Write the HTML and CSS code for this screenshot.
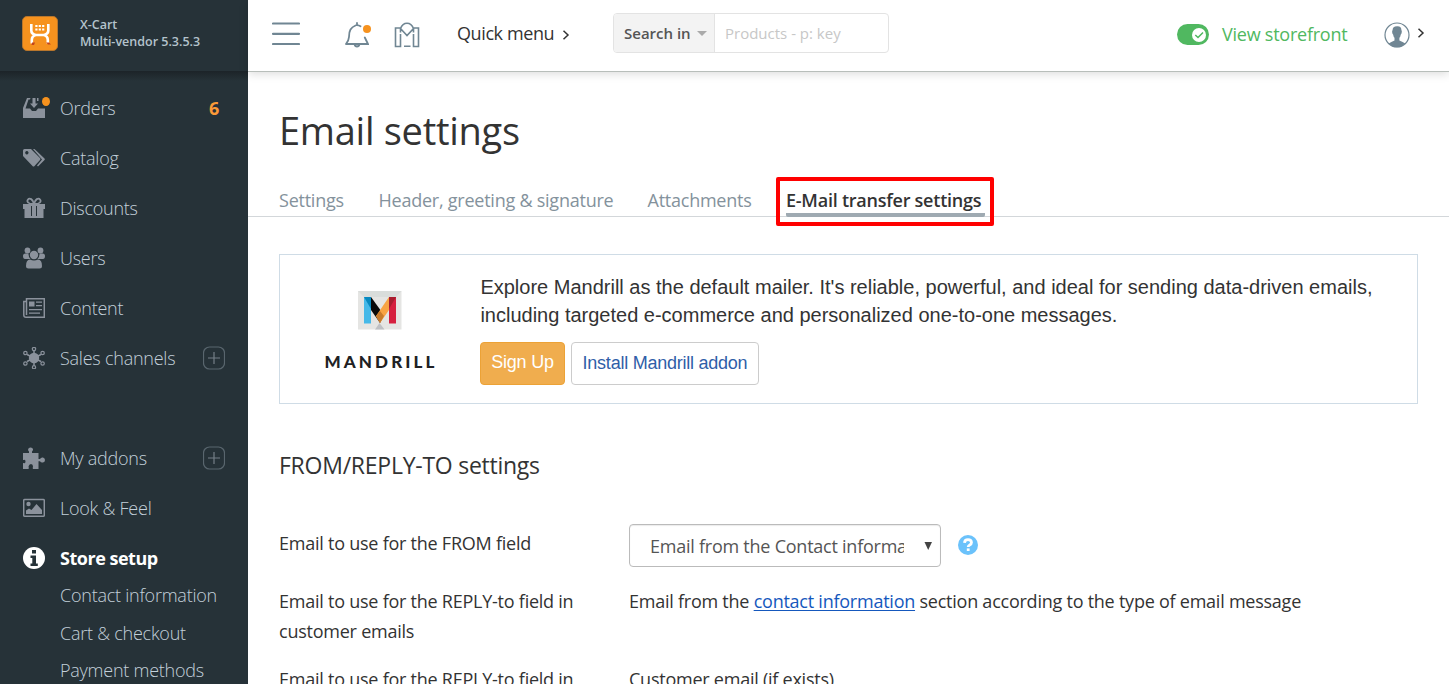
FILE: index.html
```html
<!DOCTYPE html>
<html lang="en">
<head>
<meta charset="utf-8">
<title>Email settings</title>
<link rel="stylesheet" href="styles.css">
</head>
<body>
<div class="app">
  <aside class="sidebar">
    <div class="brand">
      <svg class="brand-logo" width="36" height="36" viewBox="0 0 36 36">
        <rect x=".5" y=".5" width="35" height="34" rx="4.5" fill="#f6921e" stroke="#b8762c"/>
        <path d="M9.300 8v6.500c0 3 2.500 4 4.500 4.500h8c2-.5 4.500-1.500 4.500-4.500V8M9.800 27.500v-3.500c0-3 2-4.500 4-5h8c2 .5 4 2 4 5v3.500" fill="none" stroke="#fff" stroke-width="2.600"/>
        <path d="M13.300 9h2.200v2h-2.200zm3.400 0h2.200v2h-2.200zm3.400 0h2.200v2h-2.200zm-6.800 3.500h2.200v2h-2.200zm3.400 0h2.200v2h-2.200zm3.400 0h2.200v2h-2.200z" fill="#fff"/>
        <path d="M10 26.500h3l-1 2.500h-2.500zm14 0h3l2 2h-3z" fill="#c3451c"/>
      </svg>
      <div class="brand-text">X-Cart<br>Multi-vendor 5.3.5.3</div>
    </div>
    <nav class="menu">
      <a class="menu-item">
        <svg class="menu-icon" viewBox="0 0 22 22"><path d="M4 1h3.500L7 2.500H5.500L2.500 11.500H7l2 2.500h4l2-2.500h7V21H0V11z"/><path d="M9.500 1h3v5.500H15L11 11 7 6.500h2.500zM14 1h1.500v3H14z"/></svg>
        <span class="menu-label">Orders</span><span class="count">6</span><i class="dot menu-dot"></i>
      </a>
      <a class="menu-item">
        <svg class="menu-icon" viewBox="0 0 22 22"><path fill-rule="evenodd" d="M0 3.500Q0 2 1.500 2H8l9 9q1 1 0 2l-5.500 6q-1 1-2 0L0 9zM3.800 4a1.700 1.700 0 1 0 .1 0z"/><path d="M10 2h1.500l10 9.500q.8.800 0 1.500L15 19.500l-1-1 5-6z"/></svg>
        <span class="menu-label">Catalog</span>
      </a>
      <a class="menu-item">
        <svg class="menu-icon" viewBox="0 0 22 22"><path fill-rule="evenodd" d="M0 7h22v5h-1.500v9h-19v-9H0zM8 9v10h6V9z"/><path d="M10 7C5 7 3.500 4.500 5 2.500S10 2 11 7C12 2 15.500.5 17 2.500S17 7 12 7" fill="none" stroke="#8b929c" stroke-width="1.800"/><path d="M9 9h4v10H9z"/></svg>
        <span class="menu-label">Discounts</span>
      </a>
      <a class="menu-item">
        <svg class="menu-icon" viewBox="0 0 22 22"><circle cx="4.500" cy="3.500" r="2.900"/><circle cx="17.500" cy="3.500" r="2.900"/><circle cx="11" cy="8" r="4.200"/><path d="M0 9q0-2.500 2-2.500h3.500q0 4 2 5.500H2Q0 12 0 9zM22 9q0-2.500-2-2.500h-3.500q0 4-2 5.500H20q2 0 2-3zM3 19q0-6.500 4-6.500 4 2 8 0 4 0 4 6.500 0 2.500-2.500 2.500h-11Q3 21.500 3 19z"/></svg>
        <span class="menu-label">Users</span>
      </a>
      <a class="menu-item">
        <svg class="menu-icon" viewBox="0 0 22 22"><path d="M3.500 18V1.700h17.800v18.600H3Q.8 20.300.8 18V4.500h2.500" fill="none" stroke="#8b929c" stroke-width="1.500"/><path d="M6 4.500h5.500v5H6zM13 4.500h6v1.300h-6zm0 3.500h6v1.300h-6zM6 12h13v1.300H6zm0 3.500h11v1.300H6z"/></svg>
        <span class="menu-label">Content</span>
      </a>
      <a class="menu-item">
        <svg class="menu-icon" viewBox="0 0 22 22"><circle cx="11" cy="11" r="5.200"/><path d="M11 3.500v15M4 7.500l14 7M4 14.500l14-7" stroke="#8b929c" stroke-width="1.500"/><g fill="none" stroke="#8b929c" stroke-width="1.200"><circle cx="11" cy="2" r="1.700"/><circle cx="11" cy="20.300" r="1.600"/><circle cx="2.400" cy="6" r="1.700"/><circle cx="19.600" cy="6" r="1.700"/><circle cx="2.400" cy="16.500" r="1.700"/><circle cx="19.600" cy="16.500" r="1.700"/></g></svg>
        <span class="menu-label">Sales channels</span>
        <svg class="add" viewBox="0 0 22 24"><rect x=".5" y="1" width="21" height="22" rx="6"/><path d="M5 12h12M11 6v12"/></svg>
      </a>
      <a class="menu-item second-group">
        <svg class="menu-icon" viewBox="0 0 22 22"><path d="M0 6h6V4.500Q4.500 3 5.500 1.500q2-2 4.200 0 1 1.500-.7 3V6h6.500v6H17q1-2 3-1.500 2 .5 2 2.500t-2 2.500q-2 .5-3-1.200h-1.500V22H10q-.5-1 0-2.500 0-2.500-2-2.500T5.500 19.500Q6 21 5.500 22H0v-6h.5q2 1 2-1.500t-2-1.500H0z"/></svg>
        <span class="menu-label">My addons</span>
        <svg class="add" viewBox="0 0 22 24"><rect x=".5" y="1" width="21" height="22" rx="6"/><path d="M5 12h12M11 6v12"/></svg>
      </a>
      <a class="menu-item">
        <svg class="menu-icon" viewBox="0 0 22 22"><rect x=".7" y="2.500" width="20.600" height="16.800" rx="1" fill="none" stroke="#8b929c" stroke-width="1.500"/><circle cx="5.500" cy="7" r="2.200"/><path d="M3 17v-3.500l3-2 2.500 1.500 5-6L19 13v4z"/></svg>
        <span class="menu-label">Look &amp; Feel</span>
      </a>
      <a class="menu-item active">
        <svg class="menu-icon" viewBox="0 0 22 22"><circle cx="11" cy="11" r="11" fill="#fff"/><path d="M9 3h4v3.500H9zM7.500 8.500H13v8h1.800V19H7.500v-2.500h1.800V11H7.500z" fill="#263238"/></svg>
        <span class="menu-label">Store setup</span>
      </a>
      <div class="submenu">
        <a>Contact information</a><a>Cart &amp; checkout</a><a>Payment methods</a>
      </div>
    </nav>
  </aside>

  <div class="main">
    <header class="topbar">
      <svg class="burger" width="28" height="24" viewBox="0 0 28 24"><path d="M1 1.500h26M1 11.800h26M1 22h26"/></svg>
      <div class="bell">
        <svg width="24" height="26" viewBox="0 0 24 26"><path d="M1 22h22L19.800 15.500M1 22q2.800-3.500 3-7 0-5 1.500-7.500t5-4M12 1v2.200q2 .2 3.500 1.100M9.500 22q.5 2.500 2.500 2.500t2.500-2.500"/></svg>
        <i class="dot bell-dot"></i>
      </div>
      <svg class="market" width="26" height="26" viewBox="0 0 26 26"><path d="M6.500 10.500V6H1.500v18.500h5V12M19.500 10.500V6h5v18.500h-5V12M6.500 6.500 13 13.500l6.500-7Q17.500 1.200 13 1.200T6.500 6.500v4M19.500 6.500v4M10 24.300h6.500"/></svg>
      <span class="quick">Quick menu</span>
      <svg class="chev" width="8" height="10" viewBox="0 0 8 10"><path d="M1.500 .7 6 5 1.500 9.300"/></svg>
      <div class="search"><span class="search-in"><span class="search-label">Search in</span><i class="caret"></i></span><span class="search-field">Products - p: key</span></div>
      <div class="toggle"><svg width="14" height="14" viewBox="0 0 14 14"><circle cx="7" cy="7" r="7" fill="#fff"/><path d="M3.300 7 6 9.500l5-5"/></svg></div>
      <span class="storefront">View storefront</span>
      <svg class="avatar" width="26" height="26" viewBox="0 0 26 26"><circle cx="13" cy="13" r="12" fill="#fff" stroke="#708693" stroke-width="1.200"/><path d="M8.600 8Q8.500 4.500 13 4.200t4.400 3.800q.8 1 .2 3.200-.5 1-.8 1.200-.4 2.300-1.400 3.400v2.600q3.500 1.600 5.900 3.200-3.300 3.600-8.300 3.600t-8.300-3.600q2.400-1.600 5.800-3.200v-2.600q-1-1.100-1.400-3.400-.4-.2-.8-1.200-.5-2.200.3-3.200z" fill="#708693"/></svg>
      <svg class="chev user-chev" width="8" height="10" viewBox="0 0 8 10"><path d="M1.500 .7 6 5 1.500 9.300"/></svg>
    </header>

    <h1 class="title"><span>Email settings</span></h1>
    <nav class="tabs">
      <a class="t1">Settings</a><a class="t2">Header, greeting &amp; signature</a><a class="t3">Attachments</a>
      <a class="current"><span>E-Mail transfer settings</span><i class="highlight"></i></a>
    </nav>

    <section class="promo">
      <div class="mandrill">
        <svg width="44" height="39" viewBox="0 0 44 39"><path d="M0 0h43.500v38.500H0z" fill="#e5e5e3"/><path d="M0 0h43.500L38 6H6z" fill="#d9dddb"/><path d="M6 6h7v26.500H6z" fill="#46b9e8"/><path d="M6 6h7v12z" fill="#0789bf"/><path d="M13 6 26 24l-4 8-9-13z" fill="#090909"/><path d="M31 6v13l-9 13-4-7z" fill="#f8a444"/><path d="m22 20 4 5-4 7-4-7z" fill="#c87b2b"/><path d="M31 6h7v26.500h-7z" fill="#d6203f"/><path d="M31 6h7l-7 12z" fill="#a81e30"/><path d="m21.500 32 5 6.500h-9.500z" fill="#bec0c4"/></svg>
        <span class="mandrill-name">MANDRILL</span>
      </div>
      <div class="promo-body">
        <div class="promo-text">Explore Mandrill as the default mailer. It's reliable, powerful, and ideal for sending data-driven emails,<br>including targeted e-commerce and personalized one-to-one messages.</div>
        <div class="buttons"><button class="btn signup">Sign Up</button><button class="btn install">Install Mandrill addon</button></div>
      </div>
    </section>

    <h2 class="heading">FROM/REPLY-TO settings</h2>
    <div class="form">
      <div class="row row-select">
        <span class="label">Email to use for the FROM field</span>
        <div class="select"><span class="select-text">Email from the Contact information</span><svg width="8" height="8" viewBox="0 0 8 8"><path d="M.5 0h7.500L4.200 8z" fill="#444"/></svg></div>
        <svg class="help" width="20" height="20" viewBox="0 0 20 20"><circle cx="10" cy="10" r="10" fill="#6bc2fb"/><path d="M6.500 7.800Q6.700 4.700 10 4.700t3.500 2.800q0 1.500-1.800 2.400-1.500.7-1.500 2.100" fill="none" stroke="#fff" stroke-width="2.800"/><path d="M8.800 13.400h2.800V16H8.800z" fill="#fff"/></svg>
      </div>
      <div class="row">
        <span class="label">Email to use for the REPLY-to field in<br>customer emails</span>
        <span class="value">Email from the <a class="link">contact information</a> section according to the type of email message</span>
      </div>
      <div class="row">
        <span class="label">Email to use for the REPLY-to field in</span>
        <span class="value">Customer email (if exists)</span>
      </div>
    </div>
  </div>
</div>
</body>
</html>
```

FILE: styles.css
```css
* { box-sizing: border-box; }
body { margin: 0; font-family: "Open Sans", sans-serif; font-size: 18px; letter-spacing: -.24px; color: #333; background: #fff; }
.app { display: flex; height: 684px; overflow: hidden; }
.sidebar { width: 248px; flex: none; background: #263238; color: #c3d0da; overflow: hidden; }
.brand { display: flex; height: 71px; padding: 16px 0 0 22px; }
.brand-text { margin-left: 22px; font-size: 12.5px; font-weight: 600; line-height: 17px; letter-spacing: 0; color: #b4c3cc; white-space: nowrap; }
.menu { padding-top: 12px; background: linear-gradient(#1c2328, #263238 10px); }
.menu-item { position: relative; display: flex; align-items: center; height: 50px; padding: 0 23px; font-weight: 300; white-space: nowrap; }
.menu-icon { width: 22px; height: 22px; margin-right: 15px; fill: #8b929c; flex: none; }
.menu-label { flex: 1; }
.count { margin-right: 6px; font-weight: 700; color: #fb9a38; }
.dot { position: absolute; border-radius: 50%; background: #f6921e; }
.menu-dot { left: 42px; top: 14px; width: 8px; height: 9px; }
.add { width: 22px; height: 24px; fill: none; stroke: #59666e; stroke-width: 1.2; }
.add path { stroke: #747f87; }
.second-group { margin-top: 50px; }
.active { color: #fff; font-weight: 700; letter-spacing: -.48px; }
.submenu { display: flex; flex-direction: column; padding: 0 0 0 60px; margin-top: -6px; font-weight: 300; line-height: 37.5px; white-space: nowrap; }

.main { flex: 1; min-width: 0; }
.topbar { position: relative; display: flex; align-items: center; height: 72px; padding: 0 25px; border-bottom: 1px solid #b8beba; box-shadow: 0 2px 9px rgba(0,0,0,.14); }
.burger, .bell svg, .market { fill: none; stroke: #708693; stroke-width: 1.8; stroke-linecap: round; }
.burger { margin: -4px 0 0 -1px; stroke-width: 2.200; }
.bell { position: relative; width: 24px; height: 26px; margin: -2px 0 0 45px; }
.bell svg { display: block; }
.bell-dot { left: 18px; top: 3px; width: 8px; height: 8px; }
.market { margin: -2px 0 0 25px; stroke-linecap: butt; stroke-width: 1.6; }
.quick { margin: -6px 0 0 37px; width: 98px; letter-spacing: -.4px; white-space: nowrap; }
.chev { margin: -2px 0 0 7px; fill: none; stroke: #333; stroke-width: 1.5; }
.search { display: flex; width: 276px; height: 40px; margin: -6px 0 0 43px; border: 1px solid #e3e3e3; border-radius: 4px; font-size: 15px; line-height: 38px; letter-spacing: 0; overflow: hidden; }
.search-in { display: flex; align-items: center; width: 101px; padding-left: 10px; background: #f3f3f3; border-right: 1px solid #e3e3e3; font-weight: 600; color: #555; }
.search-label { width: 67px; white-space: nowrap; }
.caret { margin: 2px 0 0 6px; border: 5px solid transparent; border-top-color: #aaa; border-bottom: 0; }
.search-field { padding-left: 10px; color: #c7c7c7; }
.toggle { display: flex; align-items: center; justify-content: flex-end; width: 32px; height: 21px; margin: -2px 0 0 auto; padding-right: 3px; border-radius: 11px; background: #50b860; }
.toggle path { fill: none; stroke: #50b860; stroke-width: 1.5; }
.storefront { margin: -3px 0 0 13px; width: 126px; color: #50b860; white-space: nowrap; }
.avatar { margin: -2px 0 0 36px; }
.user-chev { margin: -5px -1px 0 7px; }

.title { margin: 0; padding: 30px 0 1px 31px; font-size: 38px; line-height: 56px; font-weight: 400; letter-spacing: -.28px; }
.tabs { display: flex; height: 58px; padding: 28px 0 0 31px; border-bottom: 1px solid #d3d7da; line-height: 26px; color: #84929c; white-space: nowrap; }
.t1 { width: 99.500px; }
.t2 { width: 269px; }
.t3 { width: 138.500px; }
.current { position: relative; width: 199px; height: 30px; color: #333; font-weight: 600; border-bottom: 4px solid #9faab2; border-radius: 0 0 2px 2px; }
.highlight { position: absolute; left: -10px; top: -10px; width: 218px; height: 49px; border: 4px solid #f00; border-radius: 2px; }

.promo { display: flex; width: 1139px; height: 150px; margin: 37px 0 0 31px; border: 1px solid #cfdce6; font-family: "Liberation Sans", Arial, sans-serif; }
.mandrill { display: flex; flex-direction: column; align-items: center; width: 200px; padding-top: 36px; }
.mandrill-name { margin: 22px 0 0 2px; font: 900 17px/20px Lato, sans-serif; letter-spacing: 3.100px; color: #202124; }
.promo-text { padding: 18px 0 0 .4px; font-size: 20px; line-height: 28px; letter-spacing: 0; white-space: nowrap; }
.buttons { display: flex; gap: 6px; margin-top: 13px; }
.btn { height: 43px; border-radius: 4px; font: 18px/20px "Liberation Sans", Arial, sans-serif; letter-spacing: -.24px; white-space: nowrap; }
.signup { width: 85px; padding: 0 0 4px; border: 1px solid #eca236; background: #f0ad4e; color: #fff; }
.install { width: 188px; padding: 0 0 2px; border: 1px solid #ccc; background: #fff; color: #2f5ea8; }

.heading { margin: 0; padding: 45px 0 0 31px; font-size: 23px; line-height: 32px; font-weight: 400; letter-spacing: -.25px; }
.form { padding: 43px 0 0 31px; }
.row { display: flex; line-height: 30px; height: 78px; white-space: nowrap; }
.row-select { height: 62px; }
.label { width: 350px; flex: none; }
.row-select .label { padding-top: 4px; }
.select { display: flex; align-items: center; width: 312px; height: 43px; padding: 1px 8px 0 20px; border: 1px solid #bbb; border-radius: 4px; box-shadow: inset 0 1px 1px rgba(0,0,0,.08); color: #555; }
.select-text { width: 254px; overflow: hidden; margin-right: 20px; }
.select svg { flex: none; }
.help { margin: 11px 0 0 17px; }
.link { color: #1558bd; text-decoration: underline; text-underline-offset: 2px; text-decoration-thickness: 1px; }
```
